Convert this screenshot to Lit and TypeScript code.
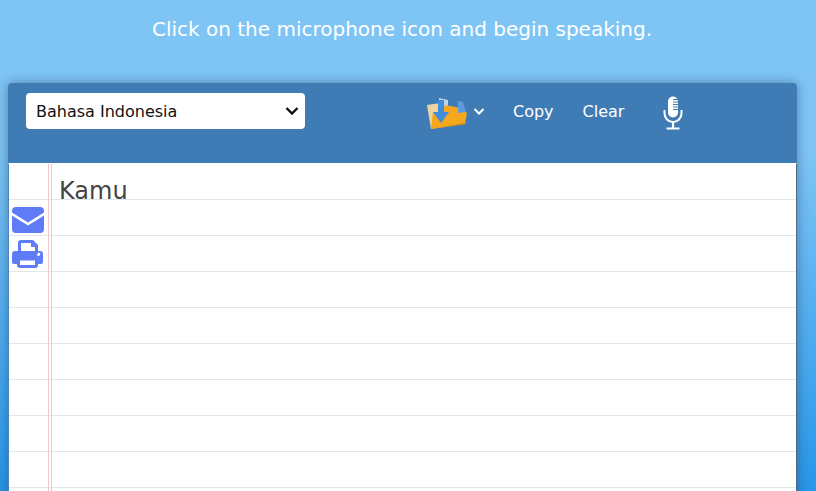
import { LitElement, html, css, svg } from "lit";
import { customElement } from "lit/decorators.js";

@customElement("app-root")
export class AppRoot extends LitElement {
  static styles = css`
    :host {
      display: block;
      width: 816px;
      height: 491px;
      overflow: hidden;
      font-family: "DejaVu Sans", Verdana, sans-serif;
      background: linear-gradient(180deg, #7ec5f6 0, #7ec5f6 150px, #2697ea 491px);
    }
    .intro {
      height: 83px;
      box-sizing: border-box;
      padding: 17px 12px 0 0;
      text-align: center;
      color: #fff;
      font-size: 20px;
      line-height: 24px;
    }
    .card {
      margin: 0 19px 0 8px;
      height: 500px;
      border-radius: 4px 4px 0 0;
      box-shadow: 0 0 12px rgba(40, 60, 90, 0.5);
      overflow: hidden;
      display: flex;
      flex-direction: column;
    }
    .bar {
      height: 80px;
      flex: none;
      background: #3f7cb5;
      display: flex;
      align-items: flex-start;
      color: #fff;
    }
    .lang {
      width: 279px;
      height: 36px;
      margin: 10px 0 0 18px;
      box-sizing: border-box;
      padding: 0 6px 0 10px;
      background: #fff;
      border-radius: 4px;
      color: #111;
      font-size: 16px;
      display: flex;
      align-items: center;
      justify-content: space-between;
    }
    .folder { margin: 14px 0 0 122px; }
    .chev { margin: 24px 0 0 5px; }
    .action { font-size: 16px; line-height: 22px; margin-top: 18px; }
    .copy { margin-left: 28px; }
    .clear { margin-left: 29px; }
    .mic { margin: 12px 0 0 38px; }
    .paper {
      flex: 1;
      display: flex;
      border-top: 1px solid #fff;
      border-left: 1px solid #4a86bd;
      border-right: 1px solid #4c6a86;
      background-color: #fff;
      background-clip: padding-box;
      background-image: repeating-linear-gradient(
        180deg,
        transparent 0,
        transparent 35px,
        #dfe8e6 35px,
        #dfe8e6 36px
      );
    }
    .margin {
      width: 40px;
      flex: none;
      box-sizing: border-box;
      border-right: 1px solid #f0c6c6;
      padding: 43px 0 0 3px;
      display: flex;
      flex-direction: column;
      gap: 7px;
    }
    .text {
      flex: 1;
      border-left: 1px solid #f0c6c6;
      margin-left: 2px;
      padding: 11px 0 0 7px;
      color: #444;
      font-size: 24px;
      line-height: 32px;
    }
    svg { display: block; }
  `;

  private selectArrow = svg`<svg width="14" height="10" viewBox="0 0 14 10"><path d="M1.500 2 7 7.500 12.500 2" fill="none" stroke="#111" stroke-width="2.400"/></svg>`;

  render() {
    return html`
      <div class="intro">Click on the microphone icon and begin speaking.</div>
      <div class="card">
        <div class="bar">
          <div class="lang"><span>Bahasa Indonesia</span>${this.selectArrow}</div>
          <svg class="folder" width="41" height="33" viewBox="0 0 41 33">
            <path d="M0 8l14-2 1 24-11 2z" fill="#ecd39f"/>
            <path d="M12 1l9 2v10h-9z" fill="#bcd2e8"/>
            <path d="M4 32l2-17 9 1 3-8 16 3 6 5-2 11z" fill="#f5a71e"/>
            <path d="M4 32l33-6 2 0v1z" fill="#d98c14"/>
            <path d="M31 4l5 1 3 10-8 1z" fill="#5f9ade"/>
            <path d="M11 3h6v12h5L14 26 6 15h5z" fill="#3f8edb"/>
          </svg>
          <svg class="chev" width="12" height="9" viewBox="0 0 12 9"><path d="M1.500 2 6 6.500 10.500 2" fill="none" stroke="#fff" stroke-width="2"/></svg>
          <div class="action copy">Copy</div>
          <div class="action clear">Clear</div>
          <svg class="mic" width="22" height="36" viewBox="0 0 22 36">
            <rect x="6" y="1.500" width="10" height="21" rx="5" fill="#fff"/>
            <path d="M11 4.500h5M11 7h5M11 9.500h5M11 12h5M11 14.500h5" stroke="#3f7cb5" stroke-width="1"/>
            <path d="M2.500 15v3.500a8.500 8.500 0 0 0 17 0V15" fill="none" stroke="#fff" stroke-width="2"/>
            <path d="M11 27v6" stroke="#fff" stroke-width="2.200"/>
            <path d="M4.500 33.500h13" stroke="#fff" stroke-width="2"/>
          </svg>
        </div>
        <div class="paper">
          <div class="margin">
            <svg width="32" height="26" viewBox="0 0 32 26">
              <path d="M4 0h24a4 4 0 0 1 4 4v1.500L16 15.500 0 5.500V4a4 4 0 0 1 4-4z" fill="#5f7bf5"/>
              <path d="M0 8.500l16 10 16-10V22a4 4 0 0 1-4 4H4a4 4 0 0 1-4-4z" fill="#5f7bf5"/>
            </svg>
            <svg width="31" height="28" viewBox="0 0 31 28" fill="#5f7bf5">
              <path fill-rule="evenodd" d="M6 3a3 3 0 0 1 3-3h12l5 5v9H6zM9 3v8h14V7h-4V3z"/>
              <path fill-rule="evenodd" d="M3 11h25a3 3 0 0 1 3 3v8a2 2 0 0 1-2 2h-3v1a3 3 0 0 1-3 3H8a3 3 0 0 1-3-3v-1H2a2 2 0 0 1-2-2v-8a3 3 0 0 1 3-3zM8 20.500v4.500h15v-4.500zM26.500 12.500a1.700 1.700 0 1 0 .01 0z"/>
            </svg>
          </div>
          <div class="text">Kamu</div>
        </div>
      </div>
    `;
  }
}
